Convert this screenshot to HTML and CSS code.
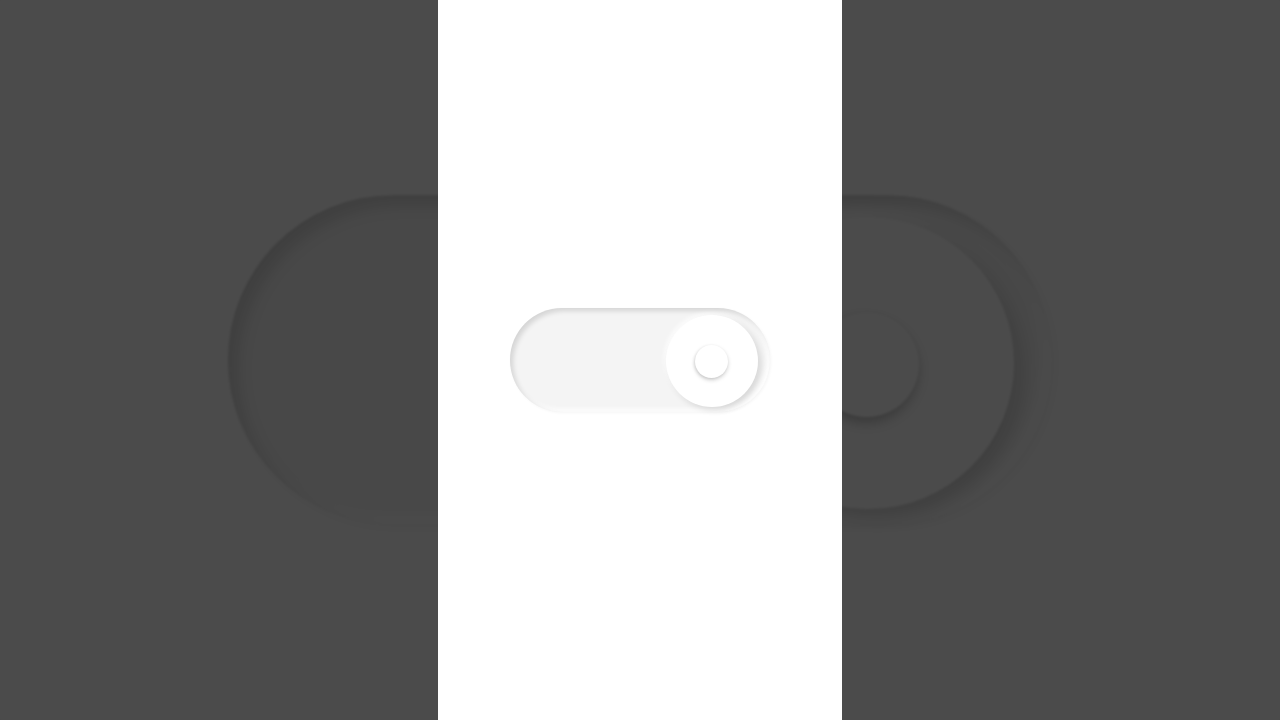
FILE: index.html
```html
<!DOCTYPE html>
<html lang="en">
<head>
<meta charset="utf-8">
<title>Neumorphic switch</title>
<link rel="stylesheet" href="styles.css">
</head>
<body>
<div class="stage">
  <div class="backdrop" aria-hidden="true">
    <div class="switch switch--large">
      <div class="knob"><div class="dot"></div></div>
    </div>
  </div>
  <main class="column">
    <div class="switch" role="switch" aria-checked="true">
      <div class="knob"><div class="dot"></div></div>
    </div>
  </main>
</div>
</body>
</html>
```
FILE: styles.css
```css
html, body {
  margin: 0;
  padding: 0;
  background: #4b4b4b;
}

.stage {
  position: relative;
  height: 720px;
  display: flex;
  justify-content: center;
  overflow: hidden;
  background: #4b4b4b;
}

/* enlarged, dimmed copy filling the letterbox */
.backdrop {
  position: absolute;
  inset: 0;
  display: flex;
  align-items: center;
  justify-content: center;
  background: #fff;
  filter: brightness(0.294) blur(1px);
}

.switch--large {
  transform: scale(3.17);
  flex-shrink: 0;
}

.column {
  position: relative;
  width: 404px;
  background: #fff;
  display: flex;
  align-items: center;
  justify-content: center;
}

.switch {
  box-sizing: border-box;
  width: 260px;
  height: 104px;
  border-radius: 52px;
  background: #f4f4f4;
  display: flex;
  align-items: center;
  justify-content: flex-end;
  padding: 2px 12px 0 0;
  box-shadow:
    inset 3px 3px 5px rgba(0, 0, 0, 0.13),
    inset -3px -3px 5px rgba(255, 255, 255, 0.9),
    1px 1px 3px rgba(0, 0, 0, 0.04);
}

.knob {
  width: 92px;
  height: 92px;
  border-radius: 50%;
  background: #fff;
  display: flex;
  align-items: center;
  justify-content: center;
  box-shadow:
    3px 3px 6px rgba(0, 0, 0, 0.12),
    -2px -2px 4px rgba(255, 255, 255, 0.8);
}

.dot {
  width: 33px;
  height: 33px;
  border-radius: 50%;
  background: #fff;
  margin: 0 2px 0 0;
  box-shadow:
    0 2px 4px rgba(0, 0, 0, 0.18),
    -1px 1px 3px rgba(0, 0, 0, 0.08);
}
```
